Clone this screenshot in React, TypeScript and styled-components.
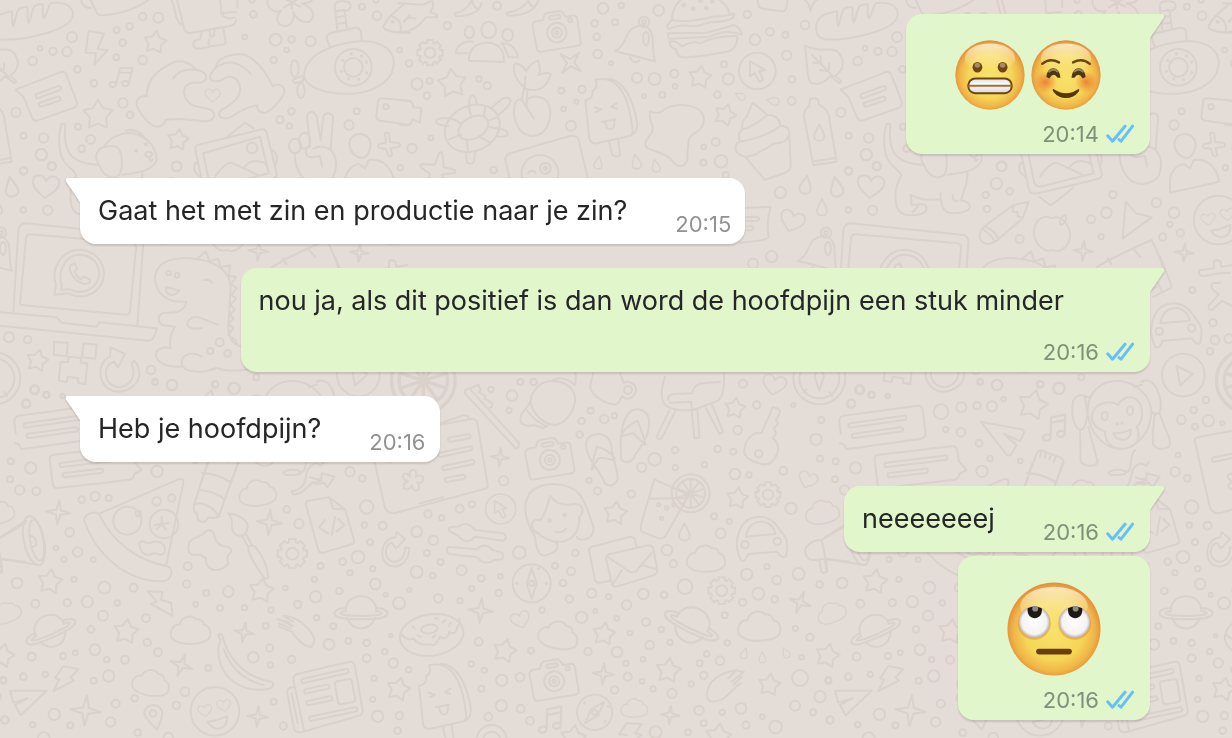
import React from "react";
import styled, { createGlobalStyle, css } from "styled-components";

const GlobalStyle = createGlobalStyle`
  * { box-sizing: border-box; }
  body {
    margin: 0;
    background: #e4dcd6;
    font-family: Inter, "Liberation Sans", sans-serif;
  }
`;

/* ---------- Wallpaper ---------- */

const TILE_WIDTH = 825;

const Wallpaper = styled.svg`
  position: fixed;
  inset: 0;
  width: 100%;
  height: 100%;
  z-index: -1;
  fill: none;
  stroke: #dad1cb;
  stroke-width: 6;
  stroke-linecap: round;
  stroke-linejoin: round;
`;

/** Circles written as "x y r; x y r; ..." */
function Dots({ at }: { at: string }) {
  return (
    <>
      {at.split(";").map((entry, i) => {
        const [x, y, r] = entry.trim().split(" ").map(Number);
        return <circle key={i} cx={x} cy={y} r={r} />;
      })}
    </>
  );
}

type Place = { x: number; y: number; s?: number; a?: number };

const place = ({ x, y, s = 1, a = 0 }: Place) => `translate(${x} ${y}) rotate(${a}) scale(${s})`;

const polar = (count: number, radii: number[], start = -90) =>
  Array.from({ length: count }, (_, i) => {
    const r = radii[i % radii.length];
    const t = ((start + (360 / count) * i) * Math.PI) / 180;
    return `${(r * Math.cos(t)).toFixed(1)} ${(r * Math.sin(t)).toFixed(1)}`;
  });

const Star = ({ x, y, s = 36, a = 8 }: Place) => (
  <path transform={place({ x, y, a })} d={`M${polar(10, [s, s * 0.56]).join("L")}Z`} />
);

const Sparkle = ({ x, y, s = 36, a = 5 }: Place) => (
  <path transform={place({ x, y, a })} d={`M${polar(8, [s, s * 0.27]).join("L")}Z`} />
);

const Gear = ({ x, y, s = 40 }: Place) => {
  const points: string[] = [];
  for (let i = 0; i < 8; i++) {
    [[-13, 1], [13, 1], [17, 0.8], [28, 0.8]].forEach(([d, k]) => {
      const t = ((i * 45 + d) * Math.PI) / 180;
      points.push(`${(s * k * Math.cos(t)).toFixed(1)} ${(s * k * Math.sin(t)).toFixed(1)}`);
    });
  }
  return (
    <g transform={place({ x, y })}>
      <path d={`M${points.join("L")}Z`} />
      <circle r={s * 0.4} />
    </g>
  );
};

const Heart = (p: Place) => (
  <path transform={place(p)} d="M0 32C-14 20-38 8-38-12C-38-34-10-38 0-16C10-38 38-34 38-12C38 8 14 20 0 32Z" />
);

const Drop = (p: Place) => (
  <path transform={place(p)} d="M0-28C8-10 17 2 17 12C17 32-17 32-17 12C-17 2-8-10 0-28Z" />
);

const Cloud = (p: Place) => (
  <path
    transform={place(p)}
    d="M-58 22C-68-4-46-22-34-18C-30-42 2-52 18-34C30-38 40-28 40-18C60-16 66 12 54 26C34 42-34 50-58 22Z"
  />
);

const Planet = ({ x, y, s = 1, a = 0 }: Place) => (
  <g transform={place({ x, y, s, a })}>
    <path d="M-46 0C-48-60 48-60 46 0M-42 20C-24 62 24 62 42 20" />
    <path d="M-46-10C-92-8-92 20-40 22Q0 26 40 22C92 20 92-8 46-10" />
    <path d="M-46 0C-70 2-66 10-40 12Q0 16 40 12C66 10 70 2 46 0" />
  </g>
);

const Camera = (p: Place) => (
  <g transform={place(p)}>
    <path d="M-70-28Q-68-40-56-40L-36-40L-30-54Q-26-60-16-60L16-60Q24-60 28-52L34-40L56-40Q68-40 68-28L68 42Q68 54 56 54L-56 54Q-68 54-68 42Z" />
    <circle cy="4" r="30" />
    <circle cy="4" r="15" />
    <circle cy="4" r="5" />
    <rect x="-16" y="-49" width="34" height="11" rx="5" />
    <circle cx="46" cy="-28" r="6" />
  </g>
);

const Compass = (p: Place) => (
  <g transform={place(p)}>
    <circle r="57" />
    <path d="M0-46L15 0L0 46L-15 0Z" />
    <circle r="8" />
    <circle cy="-44" cx="20" r="2" />
    <circle cx="44" r="2" />
    <circle cx="-44" r="2" />
  </g>
);

const Note = (p: Place) => (
  <path transform={place(p)} d="M-12 22L0-28L38-28L26 20M-3-14L34-14M-12 22A10 8 0 1 1-14 16M26 20A10 8 0 1 1 24 14" />
);

const Pill = ({ x, y, w, h = 13, a }: { x: number; y: number; w: number; h?: number; a: number }) => (
  <rect transform={place({ x, y, a })} x={-w / 2} y={-h / 2} width={w} height={h} rx={h / 2} />
);

const HappyFace = (p: Place) => (
  <g transform={place(p)}>
    <circle r="73" />
    <Heart x={-30} y={-2} s={0.55} a={-8} />
    <Heart x={27} y={-17} s={0.55} a={-8} />
    <path d="M-22 32Q8 28 36 15Q38 50 6 52Q-14 48-22 32Z" />
  </g>
);

const Slice = ({ x, y, s = 1 }: Place) => (
  <g transform={place({ x, y, s })}>
    <circle r="58" />
    <circle r="44" />
    <path d={polar(10, [40]).map((q) => `M0 0L${q}`).join("")} />
  </g>
);

const Pointer = (p: Place) => (
  <g transform={place(p)}>
    <circle r="55" />
    <path d="M-22-30L-22 16L-8 6L6 32L18 27L6 0L24-2Z" />
  </g>
);

const Lolly = ({ x, y }: Place) => (
  <g transform={place({ x, y })}>
    <path d="M586 240Q596 262 578 272Q580 296 556 302L568 415Q572 432 590 430L690 408Q700 402 697 385C690 320 670 250 620 238Q600 236 586 240M620 236C670 234 700 300 712 370Q712 400 690 408M628 425L636 462Q644 474 660 466L655 420" />
    <path d="M585 322L604 328L588 336M650 310L634 320L650 326M606 366L646 358M616 364Q618 388 632 388Q646 384 642 360" />
  </g>
);

const Bell = (p: Place) => (
  <g transform={place(p)}>
    <path d="M645 153C690 130 665 85 725 76C775 85 750 140 765 184ZM690 172Q700 194 718 182" />
    <circle cx="732" cy="66" r="16" />
    <circle cx="732" cy="66" r="6" />
    <ellipse cx="738" cy="115" rx="9" ry="20" />
  </g>
);

const Car = (p: Place) => (
  <g transform={place(p)}>
    <path d="M950 520C955 470 975 440 1020 440C1065 442 1078 480 1098 505Q1105 525 1098 558Q1085 568 1072 545L985 552Q975 580 962 570Q950 540 950 520M978 500C985 460 1010 452 1030 455Q1060 460 1066 492Z" />
    <circle cx="975" cy="524" r="11" />
    <circle cx="1072" cy="514" r="11" />
  </g>
);

/* Each region keeps its own origin; all of them are drawn at three units to the pixel. */
const Region = ({ x, y, children }: { x: number; y: number; children: React.ReactNode }) => (
  <g transform={`translate(${x} ${y}) scale(0.33333)`}>{children}</g>
);

const Doodles = () => (
  <g id="doodles">
    <Region x={0} y={0}>
      <Dots at="428 50 11;475 53 15;350 91 9;389 79 10;368 128 10;216 111 15;120 145 7;159 154 11;201 155 14;349 172 9;98 183 13;232 208 10;428 180 13;282 250 10;369 309 14;390 345 10;48 337 14;234 380 9;71 407 9;131 414 14;272 418 13;124 464 17;245 446 10;155 498 12;71 513 11;530 499 14;760 43 10;734 111 7;827 119 18;875 118 10;932 124 15;860 150 7;821 180 10;1086 20 9;1131 47 13;1199 150 7;874 334 10;840 359 11;868 378 8;1070 334 9;1047 375 14;1201 503 8;756 0 8;1128 0 8" />
      <path d="M266 93L312 101L293 147L323 150L283 194L288 160L257 158Z" />
      <Star x={465} y={127} s={35} />
      <Star x={294} y={345} s={46} a={0} />
      <Star x={534} y={420} s={33} />
      <Note x={360} y={232} s={1} />
      <path d="M0 43C12 40 22 36 36 34C38 50 34 66 40 78C46 66 46 40 58 26C68 20 74 20 82 22C84 40 80 56 86 68C94 56 94 30 104 18C114 12 120 12 128 12C130 28 124 42 132 54C142 44 142 22 152 10C180 4 212 12 218 36C222 60 200 80 150 96C100 112 50 122 0 118C-36 112-36 60 0 43" />
      <path d="M47 269L180 217Q194 212 200 226L230 305Q234 318 220 324L112 362Q100 364 96 352L70 290Z" />
      <Pill x={145} y={276} w={80} a={-20} />
      <Pill x={149} y={305} w={68} a={-18} />
      <path d="M440 288C440 250 460 220 500 198C530 176 560 180 588 208M520 235C540 205 570 206 600 212C626 220 622 246 600 248C560 244 545 262 555 290C570 326 600 318 630 328C650 340 646 362 620 364C580 364 540 350 496 360C494 376 476 386 458 376C440 366 400 320 412 300Q420 286 440 288" />
      <path d="M647 200C656 168 700 160 735 164C770 180 800 220 818 258C840 248 858 262 852 280C840 306 816 330 798 338C776 342 770 326 772 316C740 316 716 340 690 352C660 362 648 344 664 330C700 312 724 290 720 262C716 232 690 222 668 238C654 248 628 246 630 228C640 200 672 184 700 188C726 194 740 208 752 222" />
      <Heart x={638} y={286} s={0.6} />
      <path d="M912 225C918 160 1000 130 1080 124C1140 120 1190 150 1180 200C1174 250 1110 282 1040 282C970 280 915 262 912 225M990 142L980 116Q978 104 990 100L1066 83Q1080 82 1083 96L1085 124M1012 90L1004 20Q1006 2 1026 4Q1052 2 1052 18Q1050 32 1034 32L1040 84M1006 34L1032 30M1008 52L1036 48M1010 72L1038 68M878 240L908 226L910 244L884 250Z" />
      <ellipse cx="884" cy="206" rx="12" ry="25" />
      <ellipse cx="903" cy="272" rx="11" ry="22" />
      <Dots at="1060 202 55;1060 202 28;1054 162 2;1085 168 2;1100 186 2;1100 219 2;1076 238 2;1046 236 2;1024 214 2;1029 181 2" />
      <path d="M803 0C800 25 820 40 843 32C820 60 835 78 860 78C880 70 884 50 880 36C890 60 910 70 930 65C950 45 935 20 905 10C925 10 935 5 940-5M850-6L900 20M852 22L896-4M875-10L875 26" />
      <path d="M515-5L528 48Q536 72 545 74M530-5L552 85Q558 102 576 98L690 78Q708 74 708 60M605 97L600 117Q575 120 581 138Q586 148 600 146L628 140M628 92L632 110L641 108L644 90M628 118Q620 138 634 138L670 134Q678 132 676 120L670 84M660-5L664 40L708 36M664 40Q676 62 704 52M712-5L712 20" />
      <path d="M272 0L290 38Q295 46 310 46C360 42 410 26 445 0M243 0Q248 24 272 24" />
      <path d="M312 440C330 410 370 395 400 400C440 410 470 440 470 480C460 510 420 518 368 524M340 438C370 440 370 500 358 525C340 540 310 530 300 500C286 480 285 460 300 446Q318 436 340 438ZM376 392Q410 384 432 410M185 372C175 400 175 420 180 450M185 372Q196 368 196 378C190 440 200 490 290 494M448 473L452 484L458 478" />
      <Dots at="409 452 3;438 433 3" />
      <ellipse cx="446" cy="463" rx="10" ry="8" />
      <path d="M612 570L586 450Q584 438 596 434L785 388Q797 386 800 398L830 520Q832 532 820 536L640 580Q616 584 612 570M626 540L610 460L780 410L806 520L645 560Q630 560 626 540M645 530Q680 480 700 490L776 526M735 500Q750 480 775 484Q800 488 802 500M680 412L735 368L762 386M818 450Q840 470 824 500M588 488Q572 510 600 530" />
      <circle cx="756" cy="444" r="16" />
      <path d="M930 440L921 350Q924 334 936 336Q946 338 950 350L962 420L970 350Q974 338 986 340Q1000 342 999 356L992 450C1010 470 1012 500 1000 530Q970 560 930 548C900 535 885 500 884 462M918 450Q914 470 935 472L960 468L966 500M940 446C960 436 980 440 992 450" />
      <ellipse cx="885" cy="438" rx="18" ry="22" />
      <ellipse cx="914" cy="422" rx="17" ry="24" />
      <path d="M1048 430Q1052 402 1080 402Q1110 404 1112 436Q1106 474 1084 474Q1050 466 1048 430M1155 400Q1162 394 1168 402L1170 426L1194 428Q1204 432 1198 440L1172 444L1176 464Q1172 474 1164 466L1158 446L1138 444Q1130 438 1138 432L1158 428Z" />
      <path d="M1150 80C1160 55 1185 35 1215 10M1150 80C1155 96 1190 98 1230 98M1175 48C1205 60 1206 80 1200 98M1213 62L1230 46" />
      <circle cx="1178" cy="66" r="3" />
      <path d="M1230 302L1145 295Q1135 296 1134 306L1129 350Q1130 360 1140 362L1230 374" />
      <circle cx="1158" cy="320" r="8" />
    </Region>

    <Region x={400} y={0}>
      <Dots at="291 17 12;142 77 11;27 190 10;51 252 17;89 243 9;81 287 10;237 237 8;262 257 11;93 414 7;36 445 14;281 510 10;584 70 10;609 25 16;664 16 8;645 67 9;590 110 10;593 162 13;633 190 6;776 31 16;711 233 15;764 237 18;823 221 12;825 259 7;787 284 9;732 289 6;484 272 9;546 268 11;491 327 7;529 305 6;513 377 15;985 237 17;972 193 9;952 284 10;1042 43 11;1065 119 16;1110 95 12;1156 105 9;1160 166 14;1215 75 13;1176 238 10;1175 302 12;947 426 12;911 441 7;963 484 19;910 488 9;977 525 9" />
      <path d="M0 98C40 94 60 75 78 52L112 52Q116 44 90 36Q104 20 98 4C88 0 78 14 66 14L-5 10M12 66Q24 48 46 56" />
      <path d="M0 300L30 304Q40 308 40 322L64 324L60 368L38 358Q34 374 20 376L0 374" />
      <path d="M165 40C190 35 205 25 215 0M165 40Q160 52 185 48C220 44 240 30 244 10M320 38C350 35 372 22 386 0M320 38Q318 50 345 46C380 44 405 28 416 0M215 0Q220 24 238 28M386 4Q390 16 404 24" />
      <Gear x={90} y={158} s={39} />
      <ellipse cx="208" cy="97" rx="14" ry="18" />
      <ellipse cx="266" cy="90" rx="22" ry="25" />
      <ellipse cx="323" cy="105" rx="16" ry="18" />
      <path d="M206 182C208 140 235 128 262 128C295 128 314 150 312 186ZM220 125C190 120 168 140 168 160L200 160M305 130C330 128 350 145 354 172L325 172Q318 145 305 130" />
      <Camera x={470} y={94} a={-9} s={0.98} />
      <Bell x={0} y={0} />
      <Star x={157} y={250} s={44} a={-6} />
      <Sparkle x={512} y={188} s={40} a={40} />
      <Star x={900} y={232} s={35} />
      <Star x={975} y={345} s={34} a={20} />
      <path d="M118 458Q128 452 128 470L132 502L165 510Q170 520 155 520L125 524Q130 540 140 555M118 458L104 494L66 492Q54 498 66 504L90 522L80 545" />
      <path d="M815 60C818 10 850-20 900-20C950-20 985 20 988 40M815 60Q795 78 805 86C830 80 840 72 870 78C900 84 920 62 950 66Q1010 60 1002 40Q985 48 940 50Q860 70 815 60M805 100Q800 118 815 116L930 110Q980 86 1025 104Q1020 80 1000 76L920 98ZM808 125Q830 120 845 140Q880 120 900 130Q950 105 1012 108Q1012 150 980 155Q900 170 860 172Q830 174 828 148Q810 145 808 125" />
      <Dots at="851 16 4;880 27 4;919 24 4;901 2 4;937 4 4" />
      <Lolly x={0} y={0} />
      <path d="M375 262C340 240 338 200 346 190Q370 195 378 215Q390 190 414 182Q425 215 415 225Q440 215 452 222Q440 270 400 270Q385 272 372 262L366 300L378 320L402 356M376 230L374 262L382 268L380 320M366 300C330 280 330 408 396 408C450 406 458 340 445 310C430 285 395 285 380 300" />
      <ellipse transform="rotate(-25 217 385)" cx="217" cy="385" rx="85" ry="68" />
      <ellipse transform="rotate(-30 220 383)" cx="220" cy="383" rx="48" ry="32" />
      <path d="M208 316Q206 288 218 286Q230 290 230 314M272 325L310 294Q330 290 332 302Q330 318 296 344M145 378Q108 376 108 364Q112 350 156 356M198 456L200 486Q210 498 222 484L226 452M292 410Q325 412 324 400Q318 388 298 386M206 322L214 350M256 320L252 348M292 352L264 362M296 386L266 380M270 428L238 410M204 452L200 416M148 418L182 404M158 356L186 372" />
      <path d="M330 540L316 480Q314 468 330 460L510 408Q530 404 536 420L565 540M384 520Q395 505 406 518" />
      <Dots at="420 520 55;436 505 16;436 505 5" />
      <path d="M750 335Q780 345 790 330C830 305 910 310 912 360C910 400 870 395 866 420Q862 460 862 480C850 510 830 500 815 480C790 450 735 455 736 432C738 410 765 400 758 380Q746 350 750 335" />
      <Pointer x={1072} y={213} />
      <path d="M1040 350Q1050 325 1058 308Q1080 325 1102 345Q1140 345 1140 378Q1170 375 1168 405L1172 500Q1170 515 1150 520L1095 540L1035 470Q1000 460 1008 435Q1015 425 1020 425Q1010 400 1028 388Q1022 365 1040 350M1028 388Q1060 380 1102 345M1020 425Q1100 410 1140 378M1035 470Q1060 470 1080 455L1100 445L1120 432L1140 428Q1160 425 1168 405" />
      <path d="M1212 350Q1210 330 1228 318L1230 298Q1242 292 1254 298L1256 314Q1280 325 1286 345L1310 485L1240 496ZM1238 485L1306 474" />
      <Drop x={1258} y={398} s={0.9} />
      <Drop x={595} y={488} s={0.7} a={10} />
      <Drop x={709} y={485} s={0.8} a={-12} />
      <Drop x={767} y={497} s={0.7} a={-12} />
      <Drop x={1020} y={288} s={0.6} a={-60} />
      <Drop x={1118} y={303} s={0.7} a={-80} />
      <path d="M1072 0L1076 18Q1080 26 1100 28L1145 34Q1158 34 1160 20L1162 0M1215 0Q1228 10 1231 34Q1236 10 1250 0" />
      <path d="M1215 137C1240 150 1262 150 1290 148C1325 148 1336 190 1322 212Q1316 220 1305 228L1324 244L1318 250L1290 228C1270 254 1245 256 1230 246C1218 220 1222 180 1215 137M1236 165L1300 230M1262 168L1262 190L1240 188M1288 190L1286 214L1260 210" />
    </Region>

    <Region x={0} y={180}>
      <Dots at="27 472 15;83 479 11;104 629 14;140 645 9;188 648 7;78 671 13;453 570 13;465 605 9;516 615 16;659 487 12;631 513 9;683 520 10;645 613 10;702 625 17;506 279 7;531 286 7" />
      <path d="M40 395L55 150Q58 130 78 130L415 165Q432 170 430 190L412 437M60 370L78 175Q80 162 92 163L400 190Q410 194 408 205L390 395Q388 405 378 404L72 376Q60 376 60 370M0 397L170 412L185 428L290 440L298 427L470 445Q465 480 445 482L0 437" />
      <path d="M168 315C150 260 190 209 240 209C285 212 312 245 312 284C308 335 255 365 205 340L163 344ZM186 318C170 270 200 224 240 224C275 226 298 250 298 284C292 325 250 348 210 328L182 330Z" />
      <path d="M212 255C205 265 215 300 250 312C265 314 272 306 270 298L250 290L242 298Q228 290 224 274L232 266L224 250Z" />
      <path d="M560 365C500 370 465 340 465 290C470 240 530 230 580 236C640 240 690 270 692 320L685 440Q685 490 725 500M560 365C550 400 520 400 495 398C470 400 472 430 490 436L525 440Q505 470 512 505C480 495 465 515 468 530C480 560 520 560 545 560M605 530C570 508 540 530 546 555C555 580 610 580 650 564C680 575 740 575 780 560M652 434L600 413C570 405 555 430 565 440Q580 450 606 444M592 236L618 214L628 244L655 236L662 262L690 256L686 288L708 290L694 312L710 325L694 345L708 355L692 375L704 388L690 405L700 415L686 432L700 445L685 465L706 480L712 494M612 300Q625 295 636 309M497 322Q515 326 538 332Q525 348 510 344Q497 340 497 322" />
      <Star x={112} y={542} s={34} a={12} />
      <path d="M162 486L203 488L200 528L162 525ZM250 490L290 494L286 536L246 532ZM206 530L243 534L242 548L262 550L256 612L234 608L235 595L203 590L200 606L176 602L182 545L204 546Z" />
      <path d="M330 530L315 540C290 570 300 615 335 632C380 645 420 610 418 580Q415 555 405 543Q395 545 396 555C410 590 390 615 360 622C325 620 310 590 322 560Q330 548 342 545L354 563L375 522L332 502Z" />
    </Region>

    <Region x={0} y={450}>
      <Dots at="32 34 9;92 54 17;30 88 9;59 120 14;109 124 12;245 149 10;285 139 14;326 144 9;471 64 17;209 247 13;168 294 7;192 328 8;233 306 14;280 329 7;51 399 16;222 388 8;313 413 18;401 413 12;106 461 12;202 458 11;262 455 17;352 459 8;309 497 15;438 505 12;273 538 10;442 577 11;563 349 12;560 402 11;619 429 9;587 463 7;685 425 16;660 474 9;733 473 8;285 599 16;474 607 12;95 620 12;189 618 9;226 608 7;320 629 8;375 629 12;10 692 9;70 680 10;136 673 8;281 692 9;326 678 17;625 654 9;404 745 10;347 761 12;163 793 17;15 810 11;98 824 8;332 816 14;211 826 9;529 766 11;555 725 13;413 848 10;131 865 18;797 527 9;809 594 11;760 622 16;811 645 8;875 628 11;821 755 9;850 828 11;897 221 14;860 178 10;962 348 9;1028 335 10;1050 368 8;1074 321 19;1100 171 20;1093 225 8;1148 227 12;1110 277 9;1118 356 8;943 388 8;856 414 7;947 440 17;1018 423 10;893 463 11;813 480 8;950 503 8;1000 529 9;1126 402 16;1157 434 6;1197 460 18;1228 420 6;987 583 16;1045 573 9;1100 579 10;1154 605 8;1172 557 5;1100 625 12;1180 639 14;1226 659 8;1122 685 8;1118 748 8;1133 799 17;1198 797 11;1193 842 10;1050 65 14;1087 85 10;1250 245 16;1250 366 18;505 862 14;382 212 42;492 222 43;415 190 8;470 154 13;515 144 11" />
      <path d="M300 190L535 88Q552 82 550 100L498 348M252 210Q256 190 280 188Q296 186 300 198C340 280 420 335 500 348Q516 352 514 370Q510 395 480 394C380 390 290 320 252 210M420 290Q412 275 430 274Q445 285 460 275Q490 272 495 295Q495 318 478 314Q465 305 450 314Q425 318 420 290M485 202L485 222L465 224M485 222L505 220M485 222L470 238M485 222L498 240" />
      <ellipse transform="rotate(-12 102 272)" cx="102" cy="272" rx="30" ry="75" />
      <ellipse transform="rotate(-10 110 270)" cx="110" cy="270" rx="20" ry="62" />
      <path d="M0 262L78 212M0 326L118 345M0 326L5 368M92 258Q112 262 108 286L95 292" />
      <path d="M605 70Q650 70 688 95M600 120Q650 125 672 148M582 165Q600 150 640 178L658 200M715 35L658 195Q652 208 624 202Q620 220 600 214Q590 208 592 192Q578 185 582 165L622 40" />
      <Cloud x={773} y={130} s={0.92} a={-5} />
      <Cloud x={572} y={542} s={0.98} />
      <Cloud x={453} y={700} s={0.92} a={10} />
      <Sparkle x={175} y={187} />
      <Sparkle x={808} y={217} s={38} />
      <Sparkle x={732} y={547} s={30} a={10} />
      <Sparkle x={544} y={645} s={35} a={20} />
      <Sparkle x={257} y={782} s={46} />
      <Sparkle x={773} y={800} s={31} />
      <Star x={150} y={395} s={38} />
      <Star x={378} y={545} s={38} />
      <Star x={784} y={422} s={38} />
      <Star x={1195} y={718} s={36} a={14} />
      <path d="M443 424L487 426L483 450L513 458L518 498L453 462L470 455ZM190 648L235 657L212 682L222 692L160 723L178 688L165 684Z" />
      <Planet x={150} y={540} a={-24} />
      <Planet x={1083} y={484} />
      <path d="M565 290Q565 270 590 262Q605 258 620 242Q640 236 645 262Q650 285 670 288Q695 290 694 305Q675 320 685 340Q670 362 640 360Q615 350 618 325Q600 310 580 315Q562 310 565 290" />
      <path d="M685 190Q740 200 743 230Q740 258 720 258Q695 255 695 225Q700 210 685 190M727 260L745 290Q740 310 790 380Q800 392 805 382Q800 330 765 290Q755 285 745 290M740 255L756 286" />
      <Gear x={877} y={311} s={45} />
      <path d="M918 165Q916 155 925 152L988 142L1035 178L1062 270Q1064 280 1055 283L970 308Q960 310 955 300ZM988 142L1000 176L1035 178M975 210L957 232L984 250M1005 200L995 256M1015 207L1033 225L1010 244" />
      <path d="M1172 265C1140 280 1140 330 1165 345C1200 360 1228 330 1228 295L1215 292C1215 330 1190 342 1170 332C1150 315 1155 285 1175 278L1188 295L1215 268L1190 246L1186 262Z" />
      <path d="M850 67Q875 50 905 66Q900 78 855 74ZM905 66C925 60 910 20 930 0M875 124C910 118 915 100 920 70Q924 46 950 40M875 124Q878 140 900 128C925 118 935 90 945 98L966 90M932 82Q950 90 964 86L965 70L1004 80L982 112L972 98Q950 104 935 98M950 40L962 48L972 36" />
      <path d="M832 508L870 518M838 530L875 545C900 580 920 592 935 590Q950 570 935 550Q900 500 850 498L880 515M845 512L878 528M836 520L872 535" />
      <path d="M655 555Q665 545 668 560C680 610 720 680 815 695Q825 705 812 715C740 735 650 690 655 590L662 572ZM672 598C690 650 730 690 790 705" />
      <path d="M470 838Q430 800 433 785Q440 765 460 765Q485 768 487 790Q485 815 470 838" />
      <circle cx="459" cy="790" r="10" />
      <path d="M30 722L140 722L62 796L45 765L82 745L40 758Z" />
      <HappyFace x={645} y={784} />
      <path d="M880 690Q880 676 892 672L1045 636Q1060 632 1064 646L1088 780Q1088 795 1075 798L905 846Q885 850 882 835L862 730Q860 715 875 712L885 712M880 690L912 840M875 730L893 820" />
      <Pill x={975} y={678} w={145} a={-13} />
      <Pill x={950} y={717} w={78} a={-12} />
      <Pill x={958} y={752} w={80} a={-12} />
      <Pill x={1000} y={792} w={148} a={-12} />
      <rect transform="rotate(-10 1035 725)" x="1009" y="690" width="52" height="70" rx="8" />
    </Region>

    <Region x={420} y={370}>
      <Dots at="301 36 9;341 36 10;213 58 8;276 77 16;267 121 8;512 122 9;485 153 10;553 147 13;583 137 8;479 194 10;765 240 10;704 268 19;665 292 14;766 293 8;853 284 8;893 237 10;940 245 9;953 180 13;969 41 12;1010 105 11;1120 106 6;1204 150 9;1188 208 17;1200 266 9;1090 302 12;945 312 16;987 315 8;507 331 8;533 363 11;634 372 11;251 332 14;119 416 12;156 403 9;24 432 11;65 444 8;40 511 14;298 548 19;466 549 10;21 549 9;62 576 9;405 587 9;453 604 12;125 601 15;38 617 8;184 625 10;241 619 7;155 655 8;236 669 10;429 639 10;55 685 13;120 692 8;448 687 11;515 670 14;566 680 8;670 672 16;732 675 10;620 705 14;741 540 16;760 581 11;902 490 15;928 454 8;882 439 9;1113 415 17;795 650 22;1015 671 18;968 697 11;1064 688 10;980 613 17;1070 630 13;1041 590 8;1136 612 18;1199 643 10;914 736 9;366 720 8;485 742 17;526 723 6;590 745 7;678 756 12;630 789 7;724 778 8;750 817 8;689 825 13;176 815 12;333 842 9;504 845 11;591 846 16;618 880 8;669 868 7;860 852 8;839 880 9;900 872 13;922 819 8;1126 775 8;1170 802 11;1145 862 7;154 882 8;193 901 8;245 931 17;300 922 13;184 956 9;623 920 12;666 934 7;584 960 11;699 957 8;756 970 14;814 942 8;851 916 11;1140 924 24;1125 1007 15;1179 1027 9;1200 980 17;1225 930 9;1230 1050 11;244 1007 17;302 1016 12;205 1040 12;330 1052 12;837 1021 14;907 1027 8;963 1015 16;1027 1040 7;851 1060 9;978 1065 11;1067 1071 19;804 1087 9;707 1087 18;1016 251 11;389 452 4;434 436 4;716 404 5;740 414 5;762 404 5;725 445 5;1198 25 78;1198 25 60;215 1110 45;215 1110 25" />
      <Slice x={10} y={32} s={1.65} />
      <path d="M1198-20L1212 20L1198 62L1184 20ZM1160 58L1150 68M1228 66L1236 78" />
      <path d="M135 70Q133 58 148 55L298 220Q298 235 286 234ZM148 55L175 45L182 60L176 66L196 78L192 84L218 100L214 112L205 115" />
      <path d="M345 60C370 20 440 25 463 70C475 110 440 160 405 166C360 160 320 110 335 75ZM335 85Q330 100 315 118Q295 140 304 160Q320 172 340 165L370 174Q385 172 385 160M320 120Q340 150 380 170M400 30Q430 15 465 45Q470 20 465 0" />
      <path d="M520 10L512 40Q505 60 530 80Q560 105 590 103Q600 95 605 80M600 10L612 40C620 30 650 40 648 60C645 85 615 95 608 78M612 60a12 12 0 1 0 24 0a12 12 0 1 0-24 0" />
      <path d="M498 225Q500 190 540 192Q575 200 575 240C585 290 600 320 590 335Q575 355 555 340C540 300 500 270 498 225M515 300Q520 265 530 230Q560 235 585 265Q580 272 570 268Q545 262 535 265Q525 280 515 300M610 160Q625 115 655 118Q695 125 686 175C680 220 650 240 640 265Q625 285 604 270C600 230 600 200 610 160M602 200Q610 175 652 152Q670 190 676 225L640 190Q615 195 602 200" />
      <path d="M735 20Q715 80 735 105Q760 125 820 120L895 92Q915 70 912 10M745 90Q740 75 765 72L815 70Q825 40 850 40L900 35M750 98L815 95Q810 110 820 120M765 125L725 205Q715 212 710 200L748 122M815 118L823 205L838 203L832 115M855 108L898 192L910 186L875 102" />
      <path d="M1055 120Q1055 108 1068 114Q1085 120 1078 132L1068 150L1074 160L1062 175L1068 190L1058 205Q1080 220 1072 250Q1055 290 1025 282Q975 270 972 245Q975 205 1005 190L1025 188Z" />
      <Heart x={1062} y={45} s={0.92} a={12} />
      <Heart x={1163} y={330} s={0.75} a={20} />
      <Heart x={302} y={750} s={0.75} a={-18} />
      <path d="M345 500C300 430 300 345 400 342C480 345 490 380 520 470Q525 500 495 508Q475 512 470 500M345 500Q350 560 375 557Q405 548 412 535Q415 525 408 518M350 490Q330 470 338 455Q348 445 360 452Q378 430 390 378Q410 405 445 405Q485 395 488 420Q485 435 478 440Q480 500 430 515Q380 520 350 485M405 485Q425 492 438 475" />
      <path d="M703 328L800 372L798 390L735 500Q725 508 715 505L665 485Q660 475 664 460ZM688 386L795 384" />
      <Slice x={812} y={370} s={0.98} />
      <Gear x={1044} y={374} s={38} />
      <Gear x={905} y={662} s={41} />
      <Camera x={389} y={266} a={-9} />
      <Camera x={402} y={930} a={-9} />
      <path d="M508 545Q505 535 516 530L630 500Q642 500 645 510L650 530M508 545L525 630Q528 640 540 638L572 632M558 565Q560 555 570 552L685 526Q697 526 700 536L712 600Q712 612 700 616L590 650Q578 652 575 640ZM562 560L630 606Q650 610 655 595L696 548M578 645L606 600M665 585L710 598" />
      <Car x={0} y={0} />
      <Pointer x={242} y={417} s={0.82} />
      <path d="M90 485Q80 470 100 470L115 470Q140 450 165 480L250 490Q265 502 250 512L165 500Q140 530 112 495ZM85 530L170 538Q195 515 218 540L245 548Q255 560 245 568L222 570Q195 590 172 562L88 552Q75 545 85 530" />
      <path d="M1290 460L1205 510C1170 508 1155 535 1155 545Q1160 570 1180 570L1216 566Q1212 540 1205 510M1216 566L1290 575M1198 570L1204 606Q1212 612 1222 604L1218 568" />
      <Cloud x={858} y={567} s={0.95} />
      <Cloud x={415} y={797} s={0.98} a={12} />
      <Cloud x={1018} y={770} s={1.05} />
      <Cloud x={643} y={1015} s={0.66} />
      <Cloud x={1207} y={427} s={0.84} a={-8} />
      <Cloud x={1235} y={729} s={0.72} a={-20} />
      <Compass x={335} y={640} />
      <Compass x={524} y={1027} s={0.93} a={42} />
      <Sparkle x={182} y={722} s={38} />
      <Sparkle x={240} y={262} s={28} />
      <Sparkle x={1140} y={697} s={34} a={20} />
      <Sparkle x={550} y={912} s={32} />
      <Sparkle x={750} y={1035} s={28} />
      <Star x={945} y={115} s={32} />
      <Star x={586} y={430} s={36} />
      <Star x={952} y={385} s={33} />
      <Star x={552} y={792} s={35} />
      <Star x={254} y={843} s={36} a={14} />
      <Star x={745} y={902} s={38} />
      <Star x={1048} y={945} s={34} />
      <Star x={1222} y={857} s={37} a={14} />
      <Star x={460} y={1105} s={40} />
      <Star x={895} y={1100} s={40} />
      <Planet x={817} y={762} s={1.1} a={26} />
      <Drop x={793} y={486} s={0.95} />
      <Drop x={973} y={850} s={0.6} a={20} />
      <Drop x={1027} y={862} s={0.6} />
      <Drop x={1097} y={848} s={0.6} a={-30} />
      <Note x={388} y={1050} s={1.15} a={-12} />
      <path d="M620 1060L665 1062L645 1090L665 1095L620 1130M620 1060L597 1092L620 1095" />
      <ellipse transform="rotate(-8 35 795)" cx="35" cy="795" rx="96" ry="62" />
      <ellipse transform="rotate(-8 28 777)" cx="28" cy="777" rx="25" ry="13" />
      <path d="M-58 790Q-40 815-20 805Q0 830 30 822Q45 835 60 800Q80 815 88 785Q105 800 112 770Q122 765 118 745M68 758L76 750M86 768L92 758M45 745L54 746M38 802L46 796M-8 796L2 800M-22 770L-16 776" />
      <Lolly x={-559} y={646} />
      <path d="M860 975Q865 915 950 900L925 925M955 903L972 905L935 935M965 920L940 945M962 940C930 960 920 992 885 994Q865 1000 860 975" />
      <path d="M-150 215Q-156 204-135 200L155 147Q168 146 172 158L203 345Q204 354 195 356L-60 425Q-100 440-107 405ZM0 400L70 382M60 160L130 136Q145 134 146 146" />
      <Pill x={118} y={204} w={68} a={-10} />
      <Pill x={105} y={245} w={105} a={-12} />
      <Pill x={115} y={285} w={98} a={-12} />
      <Pill x={105} y={325} w={62} a={-10} />
      <Pill x={-60} y={262} w={80} a={-12} />
      <path transform="translate(-22 332)" d="M0-32Q14-32 10-12Q30-22 32-4Q30 8 14 6Q26 24 12 30Q0 32-2 14Q-14 34-26 22Q-32 10-14 2Q-34-4-28-18Q-18-28-8-12Q-12-32 0-32" />
    </Region>

    <Region x={740} y={150}>
      <Dots at="379 14 17;411 49 12;326 63 11;121 128 17;325 180 8;398 181 14;785 49 15;769 101 17;809 124 10;737 135 10;741 177 10;1119 134 11;1249 158 14;1302 188 16;1099 188 16;1053 208 12;1083 260 8;839 267 12;1290 223 8;1321 249 11;1268 261 11;95 320 17;39 341 15" />
      <Heart x={392} y={110} s={1.05} a={5} />
      <Heart x={156} y={214} s={0.96} a={18} />
      <Drop x={197} y={104} a={10} />
      <Drop x={289} y={110} s={1.1} a={-10} />
      <Drop x={246} y={172} s={0.9} />
      <Bell x={-452} y={184} s={0.97} />
      <path d="M435 0C436 40 480 60 484 76C470 100 460 130 470 170Q480 196 510 196C560 196 565 180 556 165Q545 160 515 166L512 134C540 152 570 150 602 148C606 170 610 190 640 190C680 188 690 180 690 168C685 155 670 152 664 152C664 130 685 110 682 66M602 130L602 148M536 166Q528 176 518 186M638 136Q636 152 652 154" />
      <path d="M898 140L930 165Q940 165 1000 112" />
      <path d="M1290 128L1290 90C1292 66 1310 45 1332 42L1350 55L1362 30C1400 24 1430 50 1438 95Z" />
      <path d="M720 265Q715 245 735 228L820 165L866 155L848 205L770 272Q735 295 720 265M736 230Q770 245 775 270M728 238Q756 254 764 276M820 168L818 185L832 186L834 200L850 203" />
      <path d="M935 205C970 190 992 235 990 260C985 300 950 308 938 300C905 312 880 270 882 245C885 200 920 195 935 205ZM960 222Q955 205 975 195Q985 210 965 225" />
      <path d="M1157 155L1188 190L1235 202L1148 266ZM1070 352Q1110 325 1235 270Q1260 320 1270 355M1183 300L1200 320M1104 326L1114 342" />
      <path d="M0 175L92 170Q78 215 86 262Q80 272 0 278M0 202L54 200Q60 206 54 212L0 214M0 230L36 228Q44 234 36 240L0 242" />
      <HappyFace x={1435} y={210} />
      <Sparkle x={1030} y={303} s={30} />
      <Sparkle x={1333} y={308} s={28} />
    </Region>

    <Region x={840} y={370}>
      <Dots at="59 59 11;94 75 9;143 77 6;34 101 11;421 37 8;471 45 15;303 125 22;364 112 15;411 107 11;456 109 15;491 88 7;601 43 9;657 55 17;724 22 9;317 178 8;363 187 13;417 220 10;450 266 8;541 273 7;1098 90 10;1061 120 10;1024 149 13;1105 152 17;1065 170 9;1147 160 6;1014 255 7;832 161 2;846 159 2;1030 15 64" />
      <path d="M10 137L232 107Q246 106 248 118L257 190Q256 202 244 206L20 238L10 222L0 220M10 137Q-2 140-2 155L2 190" />
      <Pill x={112} y={155} w={175} a={-8} />
      <Pill x={112} y={188} w={155} a={-8} />
      <path d="M104 270Q102 256 116 254L335 229Q350 228 352 242L357 275L380 300L358 312Q356 328 340 330L130 354Q116 356 113 342Z" />
      <Pill x={228} y={274} w={190} a={-7} />
      <Pill x={203} y={309} w={122} a={-7} />
      <Star x={578} y={105} s={46} a={14} />
      <path d="M422 155L545 178Q556 184 550 192L540 214L492 192L530 226L512 254Q505 260 498 252Z" />
      <Note x={640} y={174} s={1.15} a={-12} />
      <path d="M555 345L590 250Q595 240 606 242L660 262Q672 268 670 280L645 345M565 310Q600 310 645 335M604 246L600 260M618 250L614 264M632 256L628 268M646 262L642 276" />
      <path d="M743 130C740 60 790 32 835 32C890 35 935 80 934 130C930 200 880 235 840 238C790 232 750 190 743 130M835 105C815 90 760 95 755 140C755 165 775 178 795 185C795 220 820 238 850 236C892 232 905 205 890 170C915 150 910 100 885 85C860 75 840 90 835 105M820 190Q850 190 872 178Q875 205 850 210Q825 208 820 190M905 35Q930 22 950 55Q970 100 958 130Q945 135 932 125M882 52L905 44M945 130Q935 200 940 225Q955 245 985 232Q992 225 988 205L958 130M700 90Q715 70 735 78L742 130Q738 180 720 180C700 170 692 130 700 90M735 78L752 84M720 180L722 275Q735 292 765 285Q778 275 770 265L745 170" />
      <ellipse cx="794" cy="138" rx="9" ry="13" />
      <ellipse cx="870" cy="122" rx="9" ry="13" />
      <path d="M1010-12L1058 12L1020 47Z" />
    </Region>

    <Region x={1140} y={250}>
      <Dots at="157 120 9;219 218 11;225 270 13;266 266 13;210 304 10" />
      <Car x={-917} y={-280} />
      <path d="M176 66Q178 58 190 60L222 54L222 34Q232 26 242 36L244 50L276 46M176 66Q178 80 192 78L240 70L270 68M240 98L218 100Q210 108 218 118L236 134L206 166Q204 180 216 180L246 152L276 168" />
      <path d="M60 20L94 105Q96 116 84 118L40 140M30 120L50 110M48 88L66 124" />
    </Region>
  </g>
);

/* ---------- Conversation ---------- */

const Conversation = styled.main`
  padding: 14px 82px 18px 80px;
`;

const Thread = styled.ol`
  display: flex;
  flex-direction: column;
  gap: 24px;
  margin: 0;
  padding: 0;
  list-style: none;
`;

const Group = styled.li<{ $sent?: boolean }>`
  display: flex;
  flex-direction: column;
  gap: 4px;
  align-items: ${(p) => (p.$sent ? "flex-end" : "flex-start")};
`;

const Bubble = styled.article<{ $sent?: boolean; $tail?: boolean; $wide?: boolean }>`
  position: relative;
  display: flex;
  justify-content: space-between;
  gap: 48px;
  max-width: 85%;
  padding: 14px ${(p) => (p.$sent ? "16px" : "14px")} 6px 18px;
  border-radius: 16px;
  background: ${(p) => (p.$sent ? "#e1f6cb" : "#ffffff")};
  color: #262628;
  box-shadow: 0 2px 2px rgba(0, 0, 0, 0.13);
  ${(p) =>
    p.$tail &&
    (p.$sent
      ? css`border-top-right-radius: 0;`
      : css`border-top-left-radius: 0;`)}
  ${(p) =>
    p.$wide &&
    css`
      width: 85%;
      flex-direction: column;
      gap: 12px;
    `}
`;

const StickerBubble = styled(Bubble)`
  flex-direction: column;
  gap: 12px;
  padding-top: 26px;
`;

const Tail = styled.svg<{ $sent?: boolean }>`
  position: absolute;
  top: 0;
  width: 15px;
  height: 26px;
  fill: ${(p) => (p.$sent ? "#e1f6cb" : "#ffffff")};
  filter: drop-shadow(0 1px 1px rgba(0, 0, 0, 0.2));
  ${(p) => (p.$sent ? "left: 100%;" : "right: 100%; transform: scaleX(-1);")}
  clip-path: inset(0 -4px 0 0);
`;

const Text = styled.p`
  margin: 0 0 8px;
  font-size: 27px;
  line-height: 38px;
`;

const Meta = styled.footer<{ $sent?: boolean }>`
  display: flex;
  align-items: center;
  align-self: flex-end;
  gap: 7px;
  height: 26px;
  flex: none;
  font-size: 22px;
  line-height: 24px;
  padding-bottom: 2px;
  color: ${(p) => (p.$sent ? "#7f9179" : "#929292")};
`;

const Ticks = styled.svg`
  width: 28px;
  height: 20px;
  fill: none;
  stroke: #68bff5;
  stroke-width: 3;
  stroke-linecap: round;
  stroke-linejoin: round;
`;

const Stickers = styled.div`
  display: flex;
  gap: 6px;
  padding: 0 33px 0 31px;
`;

const Emoji = styled.svg<{ $size: number }>`
  display: block;
  width: ${(p) => p.$size}px;
  height: ${(p) => p.$size}px;
`;

function MessageTail({ sent }: { sent?: boolean }) {
  return (
    <Tail $sent={sent} viewBox="0 0 15 26" aria-hidden="true">
      <path d="M-1 0H12.5Q15 .6 14 3.4L0 24H-1Z" />
    </Tail>
  );
}

function Stamp({ time, sent }: { time: string; sent?: boolean }) {
  return (
    <Meta $sent={sent}>
      <time>{time}</time>
      {sent && (
        <Ticks viewBox="0 0 28 20" role="img" aria-label="Gelezen">
          <path d="M1.7 11.8L6.5 17.2L19 2.2M13 15.6L15 17.2L26.6 2.2" />
        </Ticks>
      )}
    </Meta>
  );
}

const FaceBase = () => (
  <>
    <circle cx="50" cy="50" r="49.5" fill="url(#skin)" />
    <ellipse cx="50" cy="26" rx="36" ry="21" fill="url(#shine)" />
  </>
);

const Grimace = () => (
  <Emoji $size={70} viewBox="0 0 100 100" role="img" aria-label="Grimas">
    <FaceBase />
    <ellipse cx="32" cy="39" rx="7" ry="7.5" fill="#6f4512" />
    <ellipse cx="68" cy="39" rx="7" ry="7.5" fill="#6f4512" />
    <ellipse cx="32" cy="36" rx="4" ry="3.5" fill="#a58a68" />
    <ellipse cx="68" cy="36" rx="4" ry="3.5" fill="#a58a68" />
    <rect x="19" y="55" width="62" height="21" rx="10" fill="url(#teeth)" stroke="#6b4512" strokeWidth="2.8" />
    <path d="M19 65.5H81" stroke="#a86d32" strokeWidth="2.8" />
  </Emoji>
);

const Smiling = () => (
  <Emoji $size={70} viewBox="0 0 100 100" role="img" aria-label="Glimlach">
    <FaceBase />
    <circle cx="21" cy="60" r="16" fill="url(#blush)" />
    <circle cx="79" cy="60" r="16" fill="url(#blush)" />
    <path d="M16 34Q27 25 40 32M60 32Q73 25 84 34" fill="none" stroke="#6a4614" strokeWidth="3.4" strokeLinecap="round" />
    <path d="M22 53C23 36 41 36 42 54L38 54Q32 45 26 55ZM58 54C59 36 77 36 78 53L74 55Q68 45 62 54Z" fill="#4f3710" />
    <path d="M26 45Q32 40 38 45M62 45Q68 40 74 45" fill="none" stroke="#97876a" strokeWidth="3" strokeLinecap="round" />
    <path d="M32 70Q50 82 68 70Q70 70 68 74Q61 83 50 83Q39 83 32 74Q30 70 32 70Z" fill="#543609" />
  </Emoji>
);

const EyeRoll = () => (
  <Emoji $size={94} viewBox="0 0 100 100" role="img" aria-label="Rollende ogen">
    <FaceBase />
    {[29, 72].map((cx) => (
      <g key={cx}>
        <circle cx={cx} cy="44" r="17.5" fill="#d9852e" opacity="0.45" />
        <circle cx={cx} cy="42.5" r="16.7" fill="url(#eye)" />
        <path d={`M${cx - 7} 28Q${cx} 24 ${cx + 8} 28C${cx + 10} 42 ${cx - 9} 42 ${cx - 7} 28Z`} fill="#1d1916" />
        <ellipse cx={cx + 1} cy="28.5" rx="3.2" ry="3" fill="#8d8984" />
      </g>
    ))}
    <rect x="31" y="71" width="38" height="6" rx="3" fill="#6b4010" />
  </Emoji>
);

export default function App() {
  return (
    <>
      <GlobalStyle />
      <Wallpaper aria-hidden="true">
        <defs>
          <radialGradient id="skin" cx="0.5" cy="0.52" r="0.52">
            <stop offset="0" stopColor="#f8e26c" />
            <stop offset="0.6" stopColor="#f5d657" />
            <stop offset="0.84" stopColor="#f0b548" />
            <stop offset="1" stopColor="#e28c38" />
          </radialGradient>
          <linearGradient id="shine" x1="0" y1="0" x2="0" y2="1">
            <stop offset="0" stopColor="#fffbe8" stopOpacity="0.75" />
            <stop offset="1" stopColor="#fff3b8" stopOpacity="0" />
          </linearGradient>
          <linearGradient id="teeth" x1="0" y1="0" x2="0" y2="1">
            <stop offset="0" stopColor="#dcdcdc" />
            <stop offset="0.4" stopColor="#ffffff" />
            <stop offset="1" stopColor="#d8d8dc" />
          </linearGradient>
          <radialGradient id="eye" cx="0.5" cy="0.5" r="0.5">
            <stop offset="0" stopColor="#ffffff" />
            <stop offset="0.8" stopColor="#f4f2f3" />
            <stop offset="1" stopColor="#bdb0ac" />
          </radialGradient>
          <radialGradient id="blush">
            <stop offset="0" stopColor="#ea6f2c" stopOpacity="0.8" />
            <stop offset="1" stopColor="#ea6f2c" stopOpacity="0" />
          </radialGradient>
        </defs>
        <Doodles />
        <use href="#doodles" x={TILE_WIDTH} />
        <use href="#doodles" x={-TILE_WIDTH} />
      </Wallpaper>
      <Conversation>
        <Thread>
          <Group $sent>
            <StickerBubble $sent $tail>
              <MessageTail sent />
              <Stickers>
                <Grimace />
                <Smiling />
              </Stickers>
              <Stamp time="20:14" sent />
            </StickerBubble>
          </Group>
          <Group>
            <Bubble $tail>
              <MessageTail />
              <Text>Gaat het met zin en productie naar je zin?</Text>
              <Stamp time="20:15" />
            </Bubble>
          </Group>
          <Group $sent>
            <Bubble $sent $tail $wide>
              <MessageTail sent />
              <Text>nou ja, als dit positief is dan word de hoofdpijn een stuk minder</Text>
              <Stamp time="20:16" sent />
            </Bubble>
          </Group>
          <Group>
            <Bubble $tail>
              <MessageTail />
              <Text>Heb je hoofdpijn?</Text>
              <Stamp time="20:16" />
            </Bubble>
          </Group>
          <Group $sent>
            <Bubble $sent $tail>
              <MessageTail sent />
              <Text>neeeeeeej</Text>
              <Stamp time="20:16" sent />
            </Bubble>
            <StickerBubble $sent>
              <Stickers>
                <EyeRoll />
              </Stickers>
              <Stamp time="20:16" sent />
            </StickerBubble>
          </Group>
        </Thread>
      </Conversation>
    </>
  );
}
